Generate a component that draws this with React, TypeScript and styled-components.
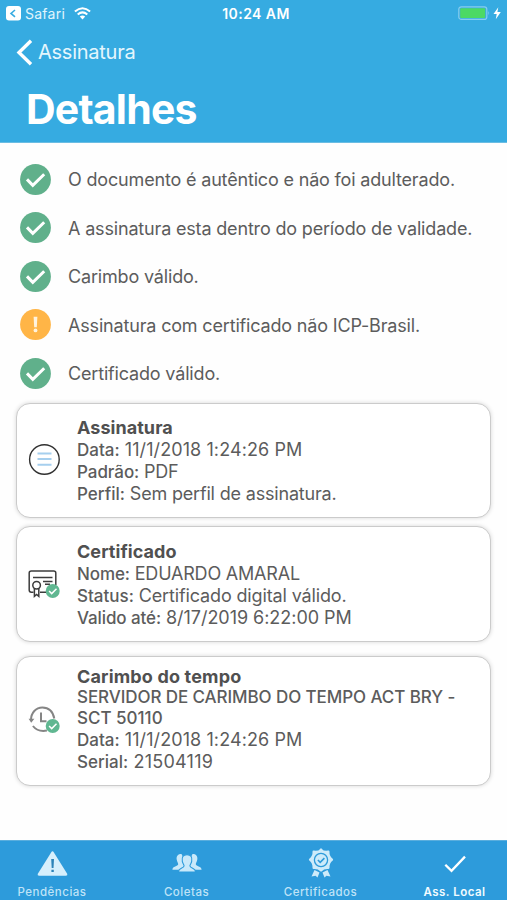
import React from "react";
import styled, { createGlobalStyle } from "styled-components";

const GlobalStyle = createGlobalStyle`
  * { box-sizing: border-box; }
  body { margin: 0; background: #fff; font-family: Inter, "Liberation Sans", sans-serif; }
`;

const Screen = styled.div`
  display: flex;
  flex-direction: column;
  width: 507px;
  height: 900px;
  overflow: hidden;
  background: #fefefe;
  color: #5c5c5c;
`;

const Header = styled.header`
  height: 143px;
  flex: none;
  background: #36abe1;
  border-bottom: 1px solid #6bbde3;
  color: #fff;
`;

const StatusBar = styled.div`
  display: grid;
  grid-template-columns: 1fr auto 1fr;
  align-items: center;
  height: 27px;
  padding: 0 5px 0 6px;
`;

const StatusGroup = styled.div<{ $end?: boolean }>`
  display: flex;
  align-items: center;
  justify-content: ${(p) => (p.$end ? "flex-end" : "flex-start")};
`;

const BackApp = styled.span`
  margin: 0 9px 0 4px;
  font-size: 14px;
  letter-spacing: 0.25px;
  color: #e0f5fd;
`;

const Clock = styled.span`
  padding-left: 4px;
  font-size: 14px;
  font-weight: 600;
  letter-spacing: 0.45px;
`;

const NavBar = styled.div`
  display: flex;
  align-items: center;
  height: 50px;
  padding-left: 16px;
`;

const NavLabel = styled.span`
  margin-left: 5px;
  font-size: 20px;
  letter-spacing: -0.25px;
  color: #e4f6fd;
`;

const Title = styled.h1`
  margin: 0 0 0 26px;
  font-size: 41px;
  line-height: 64px;
  font-weight: 700;
  letter-spacing: -0.8px;
`;

const CheckList = styled.ul`
  list-style: none;
  margin: 12px 0 0;
  padding: 0;
  flex: none;
`;

const CheckItem = styled.li`
  display: flex;
  align-items: center;
  gap: 17px;
  height: 48.5px;
  padding-left: 20px;
`;

const CheckText = styled.span`
  padding-top: 1px;
  font-size: 18px;
  letter-spacing: -0.17px;
  white-space: nowrap;
`;

const Cards = styled.main`
  flex: 1;
  padding: 5.5px 16px 0;
`;

const Card = styled.section<{ $height: number; $gap: number; $lift: number }>`
  display: flex;
  align-items: center;
  height: ${(p) => p.$height}px;
  margin-bottom: ${(p) => p.$gap}px;
  padding: 0 0 ${(p) => p.$lift}px 11px;
  border: 1px solid #cbcbcb;
  border-radius: 14px;
  background: #fff;
  box-shadow: 0 0 4px rgba(0, 0, 0, 0.16);
`;

const CardBody = styled.div<{ $drop: number }>`
  margin-left: 16px;
  padding-top: ${(p) => p.$drop}px;
`;

const CardTitle = styled.h2<{ $track: number; $h: number }>`
  margin: 0;
  font-size: 18px;
  line-height: ${(p) => p.$h}px;
  font-weight: 700;
  letter-spacing: ${(p) => p.$track}px;
  color: #505050;
`;

const Line = styled.p<{ $track: number; $h: number }>`
  margin: 0;
  font-size: 18px;
  line-height: ${(p) => p.$h}px;
  letter-spacing: ${(p) => p.$track}px;
  white-space: nowrap;
`;

const Label = styled.b<{ $track: number }>`
  font-size: 17px;
  font-weight: 500;
  letter-spacing: ${(p) => p.$track}px;
`;

const TabBar = styled.nav`
  display: grid;
  grid-template-columns: 104px 165px 103px 165px;
  height: 60px;
  flex: none;
  background: #2d9bdb;
  border-top: 1px solid #5aaede;
`;

const Tab = styled.div<{ $active?: boolean }>`
  display: flex;
  flex-direction: column;
  align-items: center;
  justify-content: space-between;
  padding: 6px 0 0;
  font-size: 11.5px;
  line-height: 15px;
  font-weight: ${(p) => (p.$active ? 600 : 500)};
  letter-spacing: 0.5px;
  color: ${(p) => (p.$active ? "#f2fbff" : "#bfe3f7")};
  white-space: nowrap;
`;

const SafariIcon = () => (
  <svg width="15" height="15" viewBox="0 0 15 15">
    <rect width="15" height="14.5" rx="3" fill="#fff" />
    <path d="M9 4 5 7.4 9 10.8" fill="none" stroke="#36abe1" strokeWidth="1.6" />
  </svg>
);

const WifiIcon = () => (
  <svg width="17" height="13" viewBox="0 0 17 13" fill="none" stroke="#fff" strokeWidth="2">
    <path d="M.9 4.6Q8.5-2.2 16.1 4.6M3.7 7.5Q8.5 3.2 13.3 7.5" />
    <path d="M5.8 9.5Q8.5 7.5 11.2 9.5L8.5 12.5Z" fill="#fff" stroke="none" />
  </svg>
);

const BatteryIcon = () => (
  <svg width="44" height="15" viewBox="0 0 44 15">
    <rect x=".8" y=".8" width="28" height="12.6" rx="2.5" fill="none" stroke="#86cdee" strokeWidth="1.2" />
    <rect x="2.2" y="2.2" width="25" height="9.8" rx="1" fill="#4cd964" />
    <path d="M30.4 5q1.6 2 0 4.2z" fill="#86cdee" />
    <path d="M40.3 1.2 35.5 8h3.2l-.9 5.3L42.8 6h-3.4z" fill="#fff" />
  </svg>
);

const BackIcon = () => (
  <svg width="17" height="27" viewBox="0 0 17 27" fill="none" stroke="#fff" strokeWidth="3.4">
    <path d="M15 1.8 3 13.5 15 25.2" />
  </svg>
);

const OkIcon = () => (
  <svg width="31" height="31" viewBox="0 0 31 31">
    <circle cx="15.5" cy="15.5" r="15.4" fill="#60b08b" />
    <path d="m7 15.4 5.8 6L24.2 10.2" fill="none" stroke="#fff" strokeWidth="3" />
  </svg>
);

const WarnIcon = () => (
  <svg width="31" height="31" viewBox="0 0 31 31">
    <circle cx="15.5" cy="15.5" r="15.4" fill="#ffb547" />
    <path d="M13.6 7.8h3.8l-.6 10.4h-2.6z" fill="#fff3de" />
    <circle cx="15.5" cy="21.4" r="1.9" fill="#fff3de" />
  </svg>
);

const Badge = ({ cx, cy }: { cx: number; cy: number }) => (
  <g stroke="none">
    <circle cx={cx} cy={cy} r="7" fill="#60b791" />
    <path d={`m${cx - 3.6} ${cy} 2.6 2.6 4.8-4.8`} fill="none" stroke="#fff" strokeWidth="1.5" />
  </g>
);

const SignatureIcon = () => (
  <svg width="33" height="32" viewBox="0 0 33 32" fill="none">
    <circle cx="16.4" cy="15.5" r="14.8" stroke="#303030" strokeWidth="1.4" />
    <path d="M9.5 9.4h14M9.5 15h14M9.5 20.7h14" stroke="#a6cfee" strokeWidth="2" />
  </svg>
);

const CertificateIcon = () => (
  <svg width="33" height="32" viewBox="0 0 33 32" fill="none" stroke="#3c3c3c" strokeWidth="1.5">
    <path d="M5.5 24.2H3.3Q1.2 24.2 1.2 22V5Q1.2 3 3.3 3h22.4q2.1 0 2.1 2v12M12 24.2h8" />
    <path d="M5 9.4h19.5M15 13.5h9.5M17 16.2h5" />
    <circle cx="8.6" cy="17.2" r="3.8" />
    <path d="M6.4 20.2v8.2l2.2-2 2.2 2v-8.2" />
    <Badge cx={24.7} cy={23} />
  </svg>
);

const TimestampIcon = () => (
  <svg width="33" height="32" viewBox="0 0 33 32" fill="none" stroke="#858585" strokeWidth="2">
    <path d="M3 16.2C3 8.5 8 3.5 14.4 3.5S25 8 26.3 14.5M4.9 22c4.3 5.4 9.6 5.4 14 4.6" />
    <path d="M13 8.5v8.7h5.5" />
    <path d="M.6 14.7h5.8L3.2 18.8z" fill="#858585" stroke="none" />
    <Badge cx={24.7} cy={22} />
  </svg>
);

const AlertTabIcon = () => (
  <svg width="31" height="33" viewBox="0 0 31 33">
    <path d="M14.1 5.4q1.4-2.2 2.8 0L30 26.500q1 2.200-1.300 2.200H2.300Q0 28.700 1 26.500z" fill="#d6effc" />
    <path d="M14.200 12h2.800l-.5 9h-1.800zM14.400 22.700h2.400v2.400h-2.400z" fill="#2d83b8" />
  </svg>
);

const PeopleTabIcon = () => (
  <svg width="30" height="33" viewBox="0 0 30 33" fill="#c9e9fa">
    <path d="M9.500 7C6 7 4.200 9 4.700 12.600c.3 2.300 1.500 3.200 1.500 4.700C5.800 19.500.6 19 .4 22.800h9L14 16z" />
    <path d="M20.500 7c3.500 0 5.300 2 4.800 5.600-.3 2.300-1.500 3.200-1.500 4.700.4 2.200 5.600 1.700 5.800 5.500h-9L16 16z" />
    <path
      d="M15 7.600c-4.200 0-5.300 3-4.700 6.700.4 2.200 1.800 3.200 1.800 4.700-.5 2.500-5.500 1.600-5.800 6.100h17.400c-.3-4.500-5.300-3.600-5.800-6.100 0-1.500 1.400-2.500 1.800-4.700.6-3.700-.5-6.700-4.700-6.700z"
      stroke="#2d9bdb"
      strokeWidth="1.1"
    />
  </svg>
);

const AwardTabIcon = () => (
  <svg width="26" height="33" viewBox="0 0 26 33" fill="#cdebfa">
    <path d="m6.500 23 5 2.500-2 5-2-1.700-4 .7zM19.500 23l-5 2.500 2 5 2-1.700 4 .7z" />
    <path d="M13 2.500Q15 5.500 20.400 4.700 20 9.500 24 12.700 20 16 20.400 20.900 15.500 20.500 13 23.500 10.500 20.500 5.600 20.900 6 16 2 12.700 6 9.500 5.600 4.700 11 5.500 13 2.500z" stroke="#cdebfa" strokeWidth="2.200" strokeLinejoin="round" />
    <circle cx="13" cy="13" r="6.600" fill="none" stroke="#2d9bdb" strokeWidth="1.300" />
    <path d="m9.900 13 2.300 2.300 4.200-4.200" fill="none" stroke="#2d9bdb" strokeWidth="1.600" />
  </svg>
);

const CheckTabIcon = () => (
  <svg width="24" height="33" viewBox="0 0 24 33">
    <path d="m2.300 17.700 6.200 6.200L22 9.600" fill="none" stroke="#fff" strokeWidth="2.300" />
  </svg>
);

const checks = [
  { ok: true, text: "O documento é autêntico e não foi adulterado." },
  { ok: true, text: "A assinatura esta dentro do período de validade." },
  { ok: true, text: "Carimbo válido." },
  { ok: false, text: "Assinatura com certificado não ICP-Brasil." },
  { ok: true, text: "Certificado válido." },
];

type Row = { label: string; value?: string; lt: number; vt: number; h?: number };
type CardData = {
  title: string;
  tt: number;
  th: number;
  height: number;
  gap: number;
  lift: number;
  drop: number;
  icon: React.ReactNode;
  rows: Row[];
};

const cards: CardData[] = [
  {
    title: "Assinatura", tt: 0.05, th: 22, height: 115, gap: 8, lift: 1, drop: 1, icon: <SignatureIcon />,
    rows: [
      { label: "Data:", value: "11/1/2018 1:24:26 PM", lt: 0, vt: 0.09 },
      { label: "Padrão:", value: "PDF", lt: -0.05, vt: -0.3 },
      { label: "Perfil:", value: "Sem perfil de assinatura.", lt: 0, vt: -0.18 },
    ],
  },
  {
    title: "Certificado", tt: 0.05, th: 22, height: 116, gap: 14, lift: 0, drop: 2, icon: <CertificateIcon />,
    rows: [
      { label: "Nome:", value: "EDUARDO AMARAL", lt: -0.1, vt: -0.2 },
      { label: "Status:", value: "Certificado digital válido.", lt: 0, vt: -0.14 },
      { label: "Valido até:", value: "8/17/2019 6:22:00 PM", lt: -0.1, vt: -0.04 },
    ],
  },
  {
    title: "Carimbo do tempo", tt: 0.16, th: 21, height: 130, gap: 0, lift: 3, drop: 0, icon: <TimestampIcon />,
    rows: [
      { label: "SERVIDOR DE CARIMBO DO TEMPO ACT BRY -", lt: -0.08, vt: 0, h: 20 },
      { label: "SCT 50110", lt: 0, vt: 0, h: 21 },
      { label: "Data:", value: "11/1/2018 1:24:26 PM", lt: 0, vt: 0.09 },
      { label: "Serial:", value: "21504119", lt: 0, vt: 0.25 },
    ],
  },
];

export default function App() {
  return (
    <Screen>
      <GlobalStyle />
      <Header>
        <StatusBar>
          <StatusGroup><SafariIcon /><BackApp>Safari</BackApp><WifiIcon /></StatusGroup>
          <Clock>10:24 AM</Clock>
          <StatusGroup $end><BatteryIcon /></StatusGroup>
        </StatusBar>
        <NavBar><BackIcon /><NavLabel>Assinatura</NavLabel></NavBar>
        <Title>Detalhes</Title>
      </Header>
      <CheckList>
        {checks.map((c) => (
          <CheckItem key={c.text}>
            {c.ok ? <OkIcon /> : <WarnIcon />}
            <CheckText>{c.text}</CheckText>
          </CheckItem>
        ))}
      </CheckList>
      <Cards>
        {cards.map((card) => (
          <Card key={card.title} $height={card.height} $gap={card.gap} $lift={card.lift}>
            {card.icon}
            <CardBody $drop={card.drop}>
              <CardTitle $track={card.tt} $h={card.th}>{card.title}</CardTitle>
              {card.rows.map((r) => (
                <Line key={r.label} $track={r.vt} $h={r.h ?? 22}>
                  <Label $track={r.lt}>{r.label}</Label>
                  {r.value && ` ${r.value}`}
                </Line>
              ))}
            </CardBody>
          </Card>
        ))}
      </Cards>
      <TabBar>
        <Tab><AlertTabIcon />Pendências</Tab>
        <Tab><PeopleTabIcon />Coletas</Tab>
        <Tab><AwardTabIcon />Certificados</Tab>
        <Tab $active><CheckTabIcon />Ass. Local</Tab>
      </TabBar>
    </Screen>
  );
}
